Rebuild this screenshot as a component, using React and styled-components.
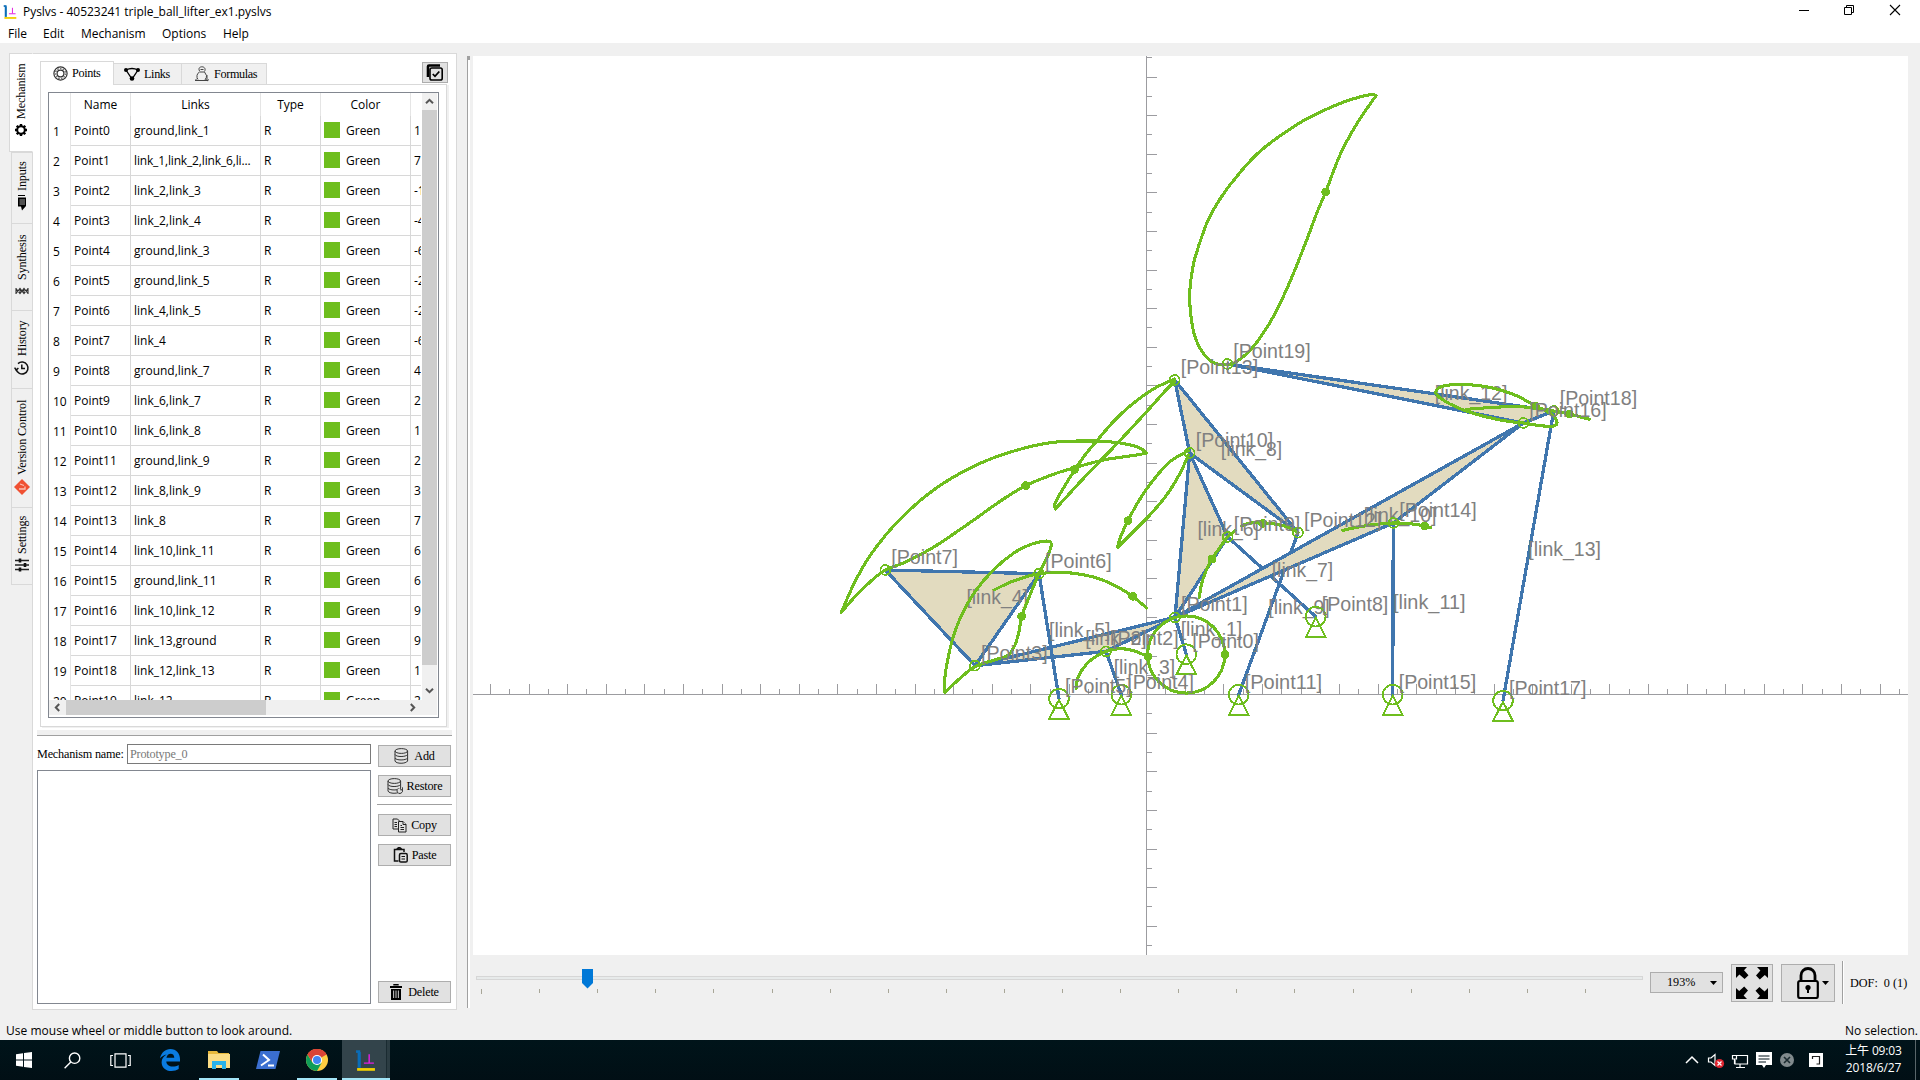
import React from "react";
import styled, { createGlobalStyle } from "styled-components";

const SANS = '"Open Sans", "Noto Sans CJK TC", sans-serif';
const SERIF = '"Liberation Serif", "Noto Sans CJK TC", serif';
const GREEN = "#6ebe1e";
const LINK = "#4076ae";

const Global = createGlobalStyle`
  * { box-sizing: border-box; }
  body { margin: 0; background: #f0f0f0; overflow: hidden; }
  svg { display: block; flex: none; }
`;

const Screen = styled.div`
  width: 1920px; height: 1080px; display: flex; flex-direction: column;
  background: #f0f0f0; font: 12px ${SANS}; color: #000; overflow: hidden;
`;
const TitleBar = styled.div`
  height: 24px; background: #fff; display: flex; align-items: center; padding: 0 3px 0 3px;
`;
const Title = styled.span`
  margin: -2px 0 0 6px; flex: 1; white-space: nowrap; letter-spacing: -0.03px;
`;
const WinButtons = styled.div`
  display: flex; height: 24px;
  svg { width: 46px; height: 24px; }
`;
const MenuBar = styled.div`
  height: 19px; background: #fff; display: flex; align-items: center; padding-left: 8px;
`;
const MenuItem = styled.span`
  width: ${p => p.$w}px; line-height: 18px; margin-top: 1px;
`;
const Main = styled.div`
  height: 975px; display: flex; padding-top: 10px;
`;
const SideTabs = styled.div`
  width: 24px; margin-left: 9px; display: flex; flex-direction: column; align-items: flex-end;
  z-index: 1; margin-right: -1px;
`;
const SideTab = styled.div`
  writing-mode: vertical-rl; transform: rotate(180deg);
  height: ${p => p.$h}px; width: ${p => (p.$on ? 24 : 22)}px;
  background: ${p => (p.$on ? "#fff" : "#f0f0f0")};
  border: 1px solid #d9d9d9;
  border-left: ${p => (p.$on ? "1px solid #fff" : "1px solid #d9d9d9")};
  border-top-width: ${p => (p.$last || p.$on ? 1 : 0)}px;
  display: flex; align-items: center; padding-top: ${p => (p.$on ? 14 : 12)}px; gap: 4px;
  font: 12.2px ${SERIF}; white-space: nowrap; letter-spacing: -0.15px;
  svg { transform: rotate(180deg); }
`;
const Page = styled.div`
  width: 425px; height: 957px; background: #fff; border: 1px solid #d9d9d9; flex: none;
  display: flex; flex-direction: column; padding: 7px 4px 0 4px;
`;
const TabStrip = styled.div`
  height: 24px; display: flex; align-items: flex-end; padding-left: 3px; margin-bottom: -1px; z-index: 1;
`;
const Tab = styled.div`
  height: ${p => (p.$on ? 24 : 21)}px; width: ${p => p.$w}px; margin-bottom: ${p => (p.$on ? 0 : 1)}px;
  background: ${p => (p.$on ? "#fff" : "#f0f0f0")};
  border: 1px solid #d9d9d9; border-bottom: 0; border-left-width: ${p => (p.$on ? 1 : 0)}px;
  display: flex; align-items: center; padding: 0 0 ${p => (p.$on ? 1 : 0)}px ${p => p.$pl}px; gap: 4px;
  font: 12.2px ${SERIF}; letter-spacing: -0.35px;
`;
const CornerButton = styled.div`
  width: 26px; height: 21px; margin: 0 4px 2px auto; border: 1px solid #adadad; background: #e1e1e1;
  display: flex; align-items: center; justify-content: center;
`;
const TabPane = styled.div`
  height: 643px; width: 407px; margin-left: 3px; border: 1px solid #d9d9d9; box-shadow: 2px 1px 0 #f0f0f0;
  padding: 7px;
`;
const TableFrame = styled.div`
  width: 391px; height: 626px; border: 1px solid #828790; display: flex; flex-direction: column; padding: 0 1px 1px 0;
`;
const TableTop = styled.div` display: flex; height: 607px; `;
const TableClip = styled.div` width: 372px; height: 607px; overflow: hidden; `;
const Row = styled.div`
  width: 500px; height: ${p => p.$h || 30}px; display: flex;
`;
const HeadCell = styled.div`
  width: ${p => p.$w}px; border-right: 1px solid #e5e5e5; display: flex; align-items: center; justify-content: center;
`;
const NumCell = styled.div`
  width: 22px; padding-left: 4px; line-height: 31px; border-right: 1px solid #e5e5e5; letter-spacing: -0.2px;
`;
const Cell = styled.div`
  width: ${p => p.$w}px; border-right: 1px solid #d8d8d8; border-bottom: 1px solid #d8d8d8;
  padding-left: 3px; line-height: 29px; white-space: nowrap; letter-spacing: ${p => (p.$tight ? -0.15 : 0)}px;
  display: flex; align-items: center; overflow: hidden;
`;
const Swatch = styled.i`
  width: 16px; height: 16px; background: ${GREEN}; margin: 0 6px 1px 0; flex: none;
`;
const VBar = styled.div`
  width: 15px; margin-left: 1px; background: #f0f0f0; display: flex; flex-direction: column; align-items: center;
`;
const VThumb = styled.div` width: 15px; height: 555px; flex: none; background: #cdcdcd; margin-bottom: 21px; `;
const HBar = styled.div`
  height: 15px; background: #f0f0f0; display: flex; align-items: center; padding-left: 4px;
`;
const HThumb = styled.div` width: 200px; height: 15px; background: #cdcdcd; margin: 0 142px 0 4px; `;
const SplitLine = styled.div`
  height: 6px; width: 415px; background: #f0f0f0; border-bottom: 1px solid #a0a0a0; margin-top: 3px;
`;
const Manager = styled.div` display: flex; margin-top: 8px; gap: 6px; `;
const ManagerLeft = styled.div` width: 334px; `;
const NameRow = styled.div` display: flex; height: 20px; align-items: center; font: 12.2px ${SERIF}; `;
const NameLabel = styled.span` width: 90px; letter-spacing: -0.2px; white-space: nowrap; `;
const NameInput = styled.div`
  width: 244px; height: 20px; border: 1px solid #7a7a7a; color: #787878; padding-left: 2px; line-height: 18px;
  letter-spacing: -0.2px;
`;
const ListBox = styled.div` height: 234px; border: 1px solid #828790; margin-top: 6px; `;
const Buttons = styled.div` width: 75px; display: flex; flex-direction: column; align-items: center; padding-top: 1px; height: 259px; `;
const Button = styled.div`
  width: 73px; height: 22px; border: 1px solid #adadad; background: #e1e1e1; flex: none;
  display: flex; align-items: center; justify-content: center; gap: ${p => p.$gap || 4}px; font: 12.2px ${SERIF};
  letter-spacing: -0.2px; margin-bottom: ${p => p.$mb || 0}px;
  ${p => p.$end && "margin-top: auto;"}
`;
const Sep = styled.div` width: 75px; height: 1px; background: #a0a0a0; margin-bottom: 9px; `;
const Splitter = styled.div`
  width: 3px; height: 952px; margin: 3px 3px 0 10px; border-left: 1px solid #a0a0a0; border-right: 1px solid #fff; background: #fff; flex: none;
  &::before { content: ""; display: block; width: 2px; height: 4px; background: #a0a0a0; }
`;
const Right = styled.div` width: 1435px; padding-top: 3px; flex: none; `;
const Canvas = styled.svg` width: 1435px; height: 899px; background: #fff; `;
const Controls = styled.div` height: 60px; display: flex; padding-top: 6px; align-items: flex-start; > * { flex: none; } `;
const SliderBox = styled.div` width: 1168px; height: 30px; margin: 8px 6px 0 3px; `;
const Combo = styled.div`
  width: 73px; height: 21px; margin: 11px 8px 0 0; border: 1px solid #adadad; background: #e1e1e1;
  display: flex; align-items: center; justify-content: space-between; padding: 0 5px 0 16px; font: 12.2px ${SERIF};
`;
const BigButton = styled.div`
  width: ${p => p.$w}px; height: 38px; margin: 3px ${p => p.$mr}px 0 0; border: 1px solid #adadad; background: #e1e1e1;
  display: flex; align-items: center; justify-content: ${p => (p.$end ? "flex-end" : "center")}; padding-right: ${p => (p.$end ? 5 : 0)}px; gap: 3px;
`;
const VLine = styled.div` width: 2px; height: 43px; border-left: 1px solid #a0a0a0; border-right: 1px solid #fff; `;
const Dof = styled.span` font: 12.2px ${SERIF}; margin: 15px 0 0 6px; white-space: nowrap; `;
const StatusBar = styled.div`
  height: 22px; display: flex; justify-content: space-between; padding: 2px 2px 0 6px; line-height: 22px;
`;
const StatusText = styled.span` letter-spacing: ${p => p.$ls || 0}px; `;
const Taskbar = styled.div`
  height: 40px; background: linear-gradient(#00141a, #010f15); display: flex; align-items: stretch; color: #fff;
`;
const Task = styled.div`
  width: ${p => p.$w || 49}px; height: 40px; display: flex; align-items: center; justify-content: center;
`;
const OpenTask = styled(Task)`
  background: linear-gradient(#a3e5f7, #a3e5f7) bottom / ${p => p.$u}px 2px no-repeat ${p => (p.$active ? ", linear-gradient(90deg, #33444b 44px, #1a2b31 44px, #1a2b31 45px, #2b3c42 45px)" : "")};
  padding-right: ${p => (p.$active ? 1 : 0)}px;
`;
const Tray = styled.div` margin-left: auto; display: flex; align-items: center; `;
const Clock = styled.div`
  width: 69px; margin: -2px 7px 0 3px; font: 12px/17px ${SANS}; letter-spacing: -0.15px; text-align: center; white-space: nowrap;
`;
const ShowDesktop = styled.div` width: 5px; height: 40px; border-left: 1px solid #59666a; `;

/* ---------- mechanism data ---------- */
const rows = [
  ["Point0", "ground,link_1", "1"], ["Point1", "link_1,link_2,link_6,li...", "7"], ["Point2", "link_2,link_3", "-1"],
  ["Point3", "link_2,link_4", "-4"], ["Point4", "ground,link_3", "-6"], ["Point5", "ground,link_5", "-2"],
  ["Point6", "link_4,link_5", "-2"], ["Point7", "link_4", "-6"], ["Point8", "ground,link_7", "4"],
  ["Point9", "link_6,link_7", "2"], ["Point10", "link_6,link_8", "1"], ["Point11", "ground,link_9", "2"],
  ["Point12", "link_8,link_9", "3"], ["Point13", "link_8", "7"], ["Point14", "link_10,link_11", "6"],
  ["Point15", "ground,link_11", "6"], ["Point16", "link_10,link_12", "9"], ["Point17", "link_13,ground", "9"],
  ["Point18", "link_12,link_13", "1"], ["Point19", "link_12", "2"],
];
const P = [
  [1186.3, 654.2], [1175, 617.3], [1106, 651.3], [975, 665.7], [1121.3, 694.7], [1059, 698.7], [1039, 573.7],
  [885.3, 570], [1315.7, 616.7], [1227.7, 537], [1189.7, 453], [1238.7, 694.7], [1298, 532.7], [1174.7, 380],
  [1393.3, 523], [1392.7, 694.7], [1523.3, 423], [1503, 700.7], [1553.7, 411], [1227.3, 364],
];
const grounded = [0, 4, 5, 8, 11, 15, 17];
const links = {
  1: [0, 1], 2: [3, 1, 2], 3: [2, 4], 4: [7, 6, 3], 5: [5, 6], 6: [1, 10, 9], 7: [8, 9], 8: [13, 10, 12],
  9: [11, 12], 10: [1, 16, 14], 11: [14, 15], 12: [19, 18, 16], 13: [17, 18],
};
const A = [820, 360], B = [1130, 330], C = [1140, 50];
const curves = [
  [C, [708,137,690,134,620,153,550,182,490,212,440,244,400,272,360,304,322,342,290,380,260,418,228,466,203,513,182,570,162,635,152,695,149,740,153,800,165,860,190,910,225,940,262,943,290,935,340,890,400,800,450,695,500,570,530,490,557,426,600,315,650,222,708,137], [557,426]],
  [A, [978,277,955,262,900,249,830,243,700,247,585,272,465,317,342,389,235,483,155,580,105,665,64,757], null],
  [A, [64,757,105,710,150,666,196,630,260,605,340,562,450,488,540,424,617,377,700,343,764,323,850,300,930,288,978,280], [617,377]],
  [A, [1064,57,1000,87,930,138,880,185,830,243,795,285,764,330,730,385,705,430,706,447], [764,328]],
  [A, [706,447,740,410,800,345,890,252,980,155,1040,88,1064,65], null],
  [A, [1105,272,1050,305,1000,360,955,425,924,482,900,535,893,562], [924,482]],
  [A, [893,562,930,525,985,470,1040,405,1080,340,1105,285], null],
  [A, [375,997,375,950,385,890,400,830,425,765,465,695,520,630,580,580,630,554,670,544,690,545,693,560,680,595,657,641,630,705,605,769,598,810,585,855,565,885,530,898,465,920,420,955,375,997], [605,769]],
  [A, [522,690,570,667,620,650,657,641,720,637,790,644,850,661,900,685,938,709,980,744], [938,709]],
  [A, [768,985,775,950,800,912,830,888,858,874,900,866,940,872,984,890], [984,890]],
  [A, [1245,512,1222,532,1200,562,1176,597,1155,640,1143,680,1138,712], [1176,597]],
  [B, [335,587,365,578,398,578,440,583,475,592,504,608], [398,580]],
  [B, [638,601,680,592,730,584,790,579,840,581,884,588,903,593], [884,588]],
  [B, [1180,279,1110,270,1020,247,960,222,922,196,920,180,945,167,1000,163,1080,172,1150,193,1216,227,1265,253,1281,276,1270,288,1230,287,1180,279], [1216,228]],
  [B, [1010,238,1090,232,1160,230,1216,234,1271,243,1318,252,1378,268], [1318,252]],
];

function smooth([ox, oy], flat) {
  const pts = [];
  for (let i = 0; i < flat.length; i += 2) pts.push([ox + flat[i] / 3, oy + flat[i + 1] / 3]);
  let d = `M${pts[0]}`;
  for (let i = 0; i < pts.length - 1; i++) {
    const a = pts[i - 1] || pts[i], b = pts[i], c = pts[i + 1], e = pts[i + 2] || c;
    d += `C${b[0] + (c[0] - a[0]) / 6},${b[1] + (c[1] - a[1]) / 6} ${c[0] - (e[0] - b[0]) / 6},${c[1] - (e[1] - b[1]) / 6} ${c}`;
  }
  return d;
}

const Label = ({ x, y, w, children }) => (
  <text x={x} y={y} textLength={w} lengthAdjust="spacingAndGlyphs" fill="#808080" fontSize="20.4"
    fontFamily='"Liberation Sans", Arial, sans-serif'>{children}</text>
);

function Plot() {
  const hx = [], vy = [];
  for (let k = -34; k <= 39; k++) hx.push(k);
  for (let k = -33; k <= 13; k++) vy.push(k);
  return (
    <Canvas viewBox="473 56 1435 899" shapeRendering="crispEdges">
      <g stroke="#9c9ca0" strokeWidth="1">
        <path d="M473 694.5H1908M1146.5 56V955" />
        {hx.map(k => k !== 0 && <path key={k} d={`M${Math.round(1146.15 + k * 19.3) + 0.5} 694V${k % 2 ? 689 : 684}`} />)}
        {vy.map(k => k !== 0 && <path key={k} d={`M1147 ${Math.round(694.15 + k * 19.3) + 0.5}H${k % 2 ? 1152 : 1157}`} />)}
      </g>
      <g fill="#e2dbbf" stroke={LINK} strokeWidth="3.3" strokeLinejoin="round">
        {Object.entries(links).map(([n, ids]) => <polygon key={n} points={ids.map(i => P[i].join(",")).join(" ")} />)}
      </g>
      {Object.entries(links).map(([n, ids]) => (
        <Label key={n} w={n > 9 ? 72.6 : 61.4} x={ids.reduce((s, i) => s + P[i][0], 0) / ids.length}
          y={ids.reduce((s, i) => s + P[i][1], 0) / ids.length + 0.5}>{`[link_${n}]`}</Label>
      ))}
      <g fill="none" stroke={GREEN} strokeWidth="3.1" strokeLinecap="round" strokeLinejoin="round">
        {curves.map(([o, f], i) => <path key={i} d={smooth(o, f)} />)}
        <circle cx="1186.2" cy="654.5" r="38.6" />
      </g>
      <g fill={GREEN}>
        {curves.map(([o, , d], i) => d && <circle key={i} cx={o[0] + d[0] / 3} cy={o[1] + d[1] / 3} r="4.4" />)}
        <circle cx="1225" cy="654.5" r="4.4" />
      </g>
      <g fill="none" stroke={GREEN} strokeWidth="1.9">
        {P.map(([x, y], i) => grounded.includes(i)
          ? <path key={i} d={`M${x - 9.8} ${y}a9.8 9.8 0 1 0 19.6 0a9.8 9.8 0 1 0 -19.6 0M${x} ${y + 1}L${x - 9.7} ${y + 20}H${x + 9.7}Z`} />
          : <circle key={i} cx={x} cy={y} r="4.9" />)}
      </g>
      {P.map(([x, y], i) => <Label key={i} w={i > 9 ? 77.4 : 66.6} x={x + 6} y={y - 6}>{`[Point${i}]`}</Label>)}
    </Canvas>
  );
}

/* ---------- icons ---------- */
const Logo = ({ s = 14 }) => (
  <svg width={s} height={s} viewBox="0 0 18 20" fill="none">
    <path d="M3 2V17" stroke="#0a6db8" strokeWidth="3" /><path d="M0 1.5H4" stroke="#0a6db8" strokeWidth="2.5" />
    <path d="M1 18.5H18" stroke="#f3d000" strokeWidth="2.6" />
    <path d="M12.5 4V12M7.5 12.5H17" stroke="#e01ee0" strokeWidth="1.4" />
  </svg>
);
const Gear = () => (
  <svg width="14" height="14" viewBox="0 0 14 14"><circle cx="7" cy="7" r="3.8" fill="none" stroke="#000" strokeWidth="2" />
    <g stroke="#000" strokeWidth="2.4">{[0, 45, 90, 135].map(a => <path key={a} transform={`rotate(${a} 7 7)`} d="M7 1V3.2M7 10.8V13" />)}</g></svg>
);
const InputIcon = () => (
  <svg width="16" height="16" viewBox="0 0 16 16"><path d="M4 1H11V0H4ZM4 2.5H12V11L8 15.5L7 11.5H4Z" fill="#000" /><path d="M5.5 5H11M5.5 7H11M5.5 9H11" stroke="#ccc" strokeWidth=".8" /></svg>
);
const SynthIcon = () => (
  <svg width="14" height="14" viewBox="0 0 14 14" fill="none" stroke="#333" strokeWidth="1.1"><path d="M1 4V10M13 4V10M1 4.5L5 9.5L9 4.5L13 9.5M1 9.5L5 4.5L9 9.5L13 4.5M5 4V10M9 4V10" /></svg>
);
const HistoryIcon = () => (
  <svg width="16" height="16" viewBox="0 0 16 16" fill="none" stroke="#111" strokeWidth="1.5"><path d="M2.2 9.5A6 6 0 1 0 4 3.6" /><path d="M7.8 4.5V8.5H11" /><path d="M.6 7.6L2.2 10L4.4 8" /></svg>
);
const GitIcon = () => (
  <svg width="16" height="16" viewBox="0 0 16 16"><path d="M8 0L16 8L8 16L0 8Z" fill="#f05133" /><path d="M6 5L10 6.5M5 10H11V7.5" stroke="#f9c1b5" strokeWidth="1.3" fill="none" /></svg>
);
const SliderIcon = () => (
  <svg width="16" height="14" viewBox="0 0 16 14"><path d="M1 2.5H15M1 7H15M1 11.5H15" stroke="#222" strokeWidth="1.4" /><path d="M6 .5V4.5M11 5V9M6 9.5V13.5" stroke="#111" strokeWidth="2.6" /></svg>
);
const PointIcon = () => (
  <svg width="15" height="15" viewBox="0 0 15 15" fill="none" stroke="#333"><circle cx="7.5" cy="7.5" r="6.6" strokeWidth="1.2" /><circle cx="7.5" cy="7.5" r="3.4" strokeWidth="1.2" /><circle cx="7.5" cy="7.5" r="5" strokeWidth="1.6" strokeDasharray="1.6 1.2" stroke="#777" /></svg>
);
const LinkIcon = () => (
  <svg width="16" height="14" viewBox="0 0 16 14" fill="none" stroke="#000" strokeWidth="1.3"><path d="M2 3Q8 0 14 3L8 12Z" /><g fill="#000" stroke="none"><circle cx="2" cy="3" r="2" /><circle cx="14" cy="3" r="2" /><circle cx="8" cy="11.5" r="2.3" /></g></svg>
);
const FormulaIcon = () => (
  <svg width="15" height="16" viewBox="0 0 15 16" fill="none" stroke="#444" strokeWidth="1"><path d="M4.5 5C3 2 5 .8 7 .8C9.5 .8 11 3 9.5 5.5M5.5 3.5H8.5M4.5 6H9.5L11.5 9.5A4.5 4.5 0 0 1 10 13.5M3 13.5A5 5 0 0 1 4.5 6M0 14.5H13M2 12.5L0 14.5M12 9V15M10.5 13L12 15L14 13.5" /></svg>
);
const CheckIcon = () => (
  <svg width="18" height="17" viewBox="0 0 18 17" fill="none" stroke="#000"><path d="M2 13V2.5Q2 1.5 3 1.5H14" strokeWidth="2.6" /><rect x="4" y="4" width="12.2" height="12" rx="1.8" strokeWidth="1.6" fill="#e1e1e1" /><path d="M6.8 10L9 12.3L13.3 7.5" strokeWidth="1.8" /></svg>
);
const DbIcon = ({ r }) => (
  <svg width="16" height="16" viewBox="0 0 16 16" fill="none" stroke="#333" strokeWidth="1"><ellipse cx="7.3" cy="3" rx="6.3" ry="2.4" /><path d="M1 3V13C2 16 12 16 13.6 13V3M1 6.5C2 9.2 12 9.2 13.6 6.5M1 10C2 12.6 12 12.6 13.6 10" />{r && <path d="M11.5 10.2A2.8 2.8 0 1 0 15.3 11.5M15.6 9.3V11.8H13.2" fill="#e1e1e1" />}</svg>
);
const CopyIcon = () => (
  <svg width="15" height="15" viewBox="0 0 15 15" stroke="#222" strokeWidth="1" fill="#e1e1e1"><path d="M1 1H5.5L7.5 3V11H1Z" /><path d="M2.5 4.5H5M2.5 6.5H5M2.5 8.5H5" /><path d="M6.5 3.5H11L14 6.5V14H6.5Z" /><path d="M11 3.5V6.5H14M8.5 7.5H10M8.5 9.5H12M8.5 11.5H12" /></svg>
);
const PasteIcon = () => (
  <svg width="15" height="16" viewBox="0 0 15 16" fill="none" stroke="#111" strokeWidth="1.5"><path d="M5.5 14H1.5V2.5H11V5" /><path d="M4 2.5Q6.2-.8 8.5 2.5" strokeWidth="2" /><rect x="6.5" y="6.5" width="7.7" height="8.6" rx="1.4" /><path d="M8.5 9.5H12M8.5 12H12" strokeWidth="1" /></svg>
);
const TrashIcon = () => (
  <svg width="12" height="16" viewBox="0 0 12 16"><path d="M4 1.5V.8H8V1.5" stroke="#000" fill="none" strokeWidth="1.4" /><path d="M0 2H12V4H0ZM1 5H11V16H1Z" fill="#000" /><path d="M3.6 6.5V14M6 6.5V14M8.4 6.5V14" stroke="#bbb" strokeWidth="1.1" /></svg>
);
const Chev = ({ d = 0 }) => (
  <svg width="9" height="9" viewBox="0 0 9 9"><path transform={`rotate(${d} 4.5 4.5)`} d="M1 6.2L4.5 2.8L8 6.2" stroke="#555" strokeWidth="2" fill="none" /></svg>
);
const Arrow = () => <svg width="7" height="4" viewBox="0 0 7 4"><path d="M0 0H7L3.5 4Z" fill="#000" /></svg>;
const ExpandIcon = () => (
  <svg width="32" height="32" viewBox="0 0 32 32" fill="#000">
    {[0, 90, 180, 270].map(a => <path key={a} transform={`rotate(${a} 16 16)`} d="M0 0H11L8 3.2L12.5 8.2L8.6 12L3.4 7.6L0 11Z" />)}
  </svg>
);
const LockIcon = () => (
  <svg width="22" height="32" viewBox="0 0 22 32" fill="none" stroke="#000"><path d="M4 13.5V8.5A7 7 0 0 1 18 8.5V13.5" strokeWidth="2.8" /><rect x="1.2" y="14" width="19.6" height="17" rx="1.8" strokeWidth="2.2" /><circle cx="11" cy="20.5" r="2.6" fill="#000" stroke="none" /><path d="M11 21V26" strokeWidth="2" /></svg>
);

const TimeSlider = () => (
  <SliderBox>
    <svg width="1168" height="30" viewBox="0 0 1168 30">
      <rect x=".5" y="7.5" width="1166" height="3" fill="#e7eaea" stroke="#d6d6d6" />
      {Array.from({ length: 20 }, (_, i) => <rect key={i} x={Math.round(5 + i * 58.1)} y="20" width="1" height={i ? 4 : 5} fill="#a8a698" />)}
      <path d="M106 0H117V14L111.5 19.5L106 14Z" fill="#0078d7" />
    </svg>
  </SliderBox>
);

const TaskIcons = {
  win: <svg width="16" height="16" viewBox="0 0 16 16"><path d="M0 2.3L7 1.3V7.5H0ZM8 1.1L16 0V7.5H8ZM0 8.5H7V14.7L0 13.7ZM8 8.5H16V16L8 14.9Z" fill="#fff" /></svg>,
  search: <svg width="17" height="17" viewBox="0 0 17 17" fill="none" stroke="#fff" strokeWidth="1.4"><circle cx="10.6" cy="6.2" r="5.2" /><path d="M6.8 10L.6 16.2" /></svg>,
  view: <svg width="21" height="15" viewBox="0 0 21 15" fill="none" stroke="#fff" strokeWidth="1.2"><path d="M5 .8H16V14.2H5ZM3 2.5H.8V12.5H3M18 2.5H20.2V12.5H18" /></svg>,
  edge: <svg width="20" height="22" viewBox="0 0 20 22"><path d="M0 9.5C1.2 3.4 5.5 0 10.3 0C16.5 0 20 4.6 20 10V12.6H6.3C6.5 16 9.3 17.6 12.4 17.6C15 17.6 17 16.9 18.7 15.9V20.1C16.8 21.3 14.3 22 11.5 22C5.4 22 1.6 18.2 1.6 13.2C1.6 9.8 3.6 7 6.6 5.4C4 5.9 1.6 7.3 0 9.5ZM6.4 8.8H14.3C14.3 6.3 12.9 4.7 10.6 4.7C8.5 4.7 6.9 6.3 6.4 8.8Z" fill="#0a7be0" /></svg>,
  folder: <svg width="22" height="18" viewBox="0 0 22 18"><path d="M0 0H9L10.5 2H21V4H0Z" fill="#e8b93c" /><path d="M0 3H22V17H0Z" fill="#fbdc84" /><path d="M4 18V10H18V18H14V14H8V18Z" fill="#28b2ea" /></svg>,
  ps: <svg width="24" height="18" viewBox="0 0 24 18"><path d="M4.5 0H24L19.5 18H0Z" fill="#3b6fd0" /><path d="M7 3.5L13 9L5 14.5M12 14.5H18" stroke="#fff" strokeWidth="2" fill="none" /></svg>,
  chrome: <svg width="22" height="22" viewBox="0 0 22 22"><circle cx="11" cy="11" r="11" fill="#ffcd41" /><path d="M11 11L1.5 5.5A11 11 0 0 1 20.5 5.6Z" fill="#db4437" /><path d="M1.5 5.5A11 11 0 0 0 11 22L15.5 14L6.5 13.5Z" fill="#0f9d58" /><path d="M11 6H20.7A11 11 0 0 0 1.5 5.5L6.2 13Z" fill="#db4437" /><circle cx="11" cy="11" r="5.1" fill="#fff" /><circle cx="11" cy="11" r="4" fill="#4285f4" /></svg>,
};
const TrayIcons = () => (
  <svg width="156" height="40" viewBox="1680 0 156 40" fill="none" stroke="#fff" strokeWidth="1.2">
    <path d="M1686 23L1692 17L1698 23" strokeWidth="1.5" />
    <path d="M1708.5 18H1711L1715 14.5V25.5L1711 22H1708.5Z" />
    <circle cx="1719.5" cy="23.5" r="4.6" fill="#e02530" stroke="none" /><path d="M1717.5 21.5L1721.5 25.5M1721.5 21.5L1717.5 25.5" />
    <path d="M1737 15.5H1747.5V24H1735V20M1740 24V27M1736 27.5H1745M1732.5 15.5H1736.5V19H1732.5ZM1734.5 19V24" />
    <path d="M1756 12H1772V25H1766L1764 28L1762 25H1756Z" fill="#fff" stroke="none" /><path d="M1758.5 16H1769.5M1758.5 19H1769.5M1758.5 22H1766" stroke="#00131a" />
    <circle cx="1787" cy="20" r="7" fill="#818a8d" stroke="none" /><path d="M1784 17L1790 23M1790 17L1784 23" stroke="#1c2b30" strokeWidth="1.6" />
    <rect x="1809" y="13" width="14" height="14" fill="#fff" stroke="none" /><path d="M1812.5 19V16.5H1819.5V24H1816.5" stroke="#222" />
  </svg>
);

export default function App() {
  return (
    <Screen>
      <Global />
      <TitleBar>
        <Logo s={14} />
        <Title>Pyslvs - 40523241 triple_ball_lifter_ex1.pyslvs</Title>
        <WinButtons>
          <svg viewBox="0 0 46 24"><path d="M20 10.5H30" stroke="#000" /></svg>
          <svg viewBox="0 0 46 24"><path d="M19.5 7.5H26.5V14.5H19.5ZM21.5 7.5V5.5H28.5V12.5H26.5" stroke="#000" fill="none" /></svg>
          <svg viewBox="0 0 46 24"><path d="M19 5L29 15M29 5L19 15" stroke="#000" strokeWidth="1.1" /></svg>
        </WinButtons>
      </TitleBar>
      <MenuBar>
        <MenuItem $w={35}>File</MenuItem><MenuItem $w={38}>Edit</MenuItem><MenuItem $w={81}>Mechanism</MenuItem>
        <MenuItem $w={61}>Options</MenuItem><MenuItem $w={40}>Help</MenuItem>
      </MenuBar>
      <Main>
        <SideTabs>
          <SideTab $h={99} $on><Gear /><span>Mechanism</span></SideTab>
          <SideTab $h={71}><InputIcon /><span>Inputs</span></SideTab>
          <SideTab $h={87}><SynthIcon /><span>Synthesis</span></SideTab>
          <SideTab $h={78}><HistoryIcon /><span>History</span></SideTab>
          <SideTab $h={119}><GitIcon /><span>Version Control</span></SideTab>
          <SideTab $h={78} $last><SliderIcon /><span>Settings</span></SideTab>
        </SideTabs>
        <Page>
          <TabStrip>
            <Tab $on $w={74} $pl={12}><PointIcon />Points</Tab>
            <Tab $w={68} $pl={10}><LinkIcon />Links</Tab>
            <Tab $w={85} $pl={13}><FormulaIcon />Formulas</Tab>
            <CornerButton><CheckIcon /></CornerButton>
          </TabStrip>
          <TabPane>
            <TableFrame>
              <TableTop>
                <TableClip>
                  <Row $h={23}>
                    <HeadCell $w={22} /><HeadCell $w={60}>Name</HeadCell><HeadCell $w={130}>Links</HeadCell>
                    <HeadCell $w={60}>Type</HeadCell><HeadCell $w={90}>Color</HeadCell><HeadCell $w={90} />
                  </Row>
                  {rows.map(([name, l, x], i) => (
                    <Row key={name}>
                      <NumCell>{i + 1}</NumCell><Cell $w={60}>{name}</Cell><Cell $w={130} $tight={l.length > 20}>{l}</Cell>
                      <Cell $w={60}>R</Cell><Cell $w={90}><Swatch />Green</Cell><Cell $w={90}>{x}</Cell>
                    </Row>
                  ))}
                </TableClip>
                <VBar>
                  <svg width="15" height="17" viewBox="-3 -4 15 17"><path d="M1 6.2L4.5 2.8L8 6.2" stroke="#555" strokeWidth="2" fill="none" /></svg>
                  <VThumb />
                  <Chev d={180} />
                </VBar>
              </TableTop>
              <HBar><Chev d={-90} /><HThumb /><Chev d={90} /></HBar>
            </TableFrame>
          </TabPane>
          <SplitLine />
          <Manager>
            <ManagerLeft>
              <NameRow><NameLabel>Mechanism name:</NameLabel><NameInput>Prototype_0</NameInput></NameRow>
              <ListBox />
            </ManagerLeft>
            <Buttons>
              <Button $mb={8}><DbIcon />Add</Button>
              <Button $mb={7}><DbIcon r />Restore</Button>
              <Sep />
              <Button $mb={8}><CopyIcon />Copy</Button>
              <Button><PasteIcon />Paste</Button>
              <Button $end $gap={6}><TrashIcon />Delete</Button>
            </Buttons>
          </Manager>
        </Page>
        <Splitter />
        <Right>
          <Plot />
          <Controls>
            <TimeSlider />
            <Combo>193%<Arrow /></Combo>
            <BigButton $w={42} $mr={8}><ExpandIcon /></BigButton>
            <BigButton $w={54} $mr={7} $end><LockIcon /><Arrow /></BigButton>
            <VLine />
            <Dof>DOF: &nbsp;0 (1)</Dof>
          </Controls>
        </Right>
      </Main>
      <StatusBar>
        <StatusText $ls={0.02}>Use mouse wheel or middle button to look around.</StatusText>
        <StatusText $ls={0.05}>No selection.</StatusText>
      </StatusBar>
      <Taskbar>
        <Task $w={48}>{TaskIcons.win}</Task>
        <Task $w={48}>{TaskIcons.search}</Task>
        <Task $w={48}>{TaskIcons.view}</Task>
        <Task $w={52}>{TaskIcons.edge}</Task>
        <OpenTask $w={46} $u={40}>{TaskIcons.folder}</OpenTask>
        <Task $w={52}>{TaskIcons.ps}</Task>
        <OpenTask $w={46} $u={40}>{TaskIcons.chrome}</OpenTask>
        <Task $w={2} />
        <OpenTask $w={48} $u={48} $active><Logo s={21} /></OpenTask>
        <Tray>
          <TrayIcons />
          <Clock><div>上午 09:03</div><div>2018/6/27</div></Clock>
          <ShowDesktop />
        </Tray>
      </Taskbar>
    </Screen>
  );
}
